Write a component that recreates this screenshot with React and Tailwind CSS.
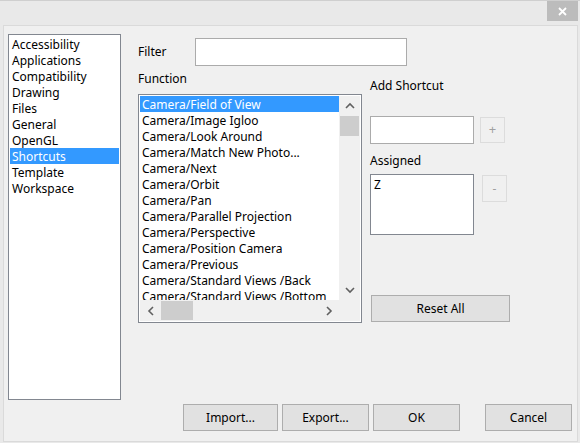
const categories = [
  'Accessibility',
  'Applications',
  'Compatibility',
  'Drawing',
  'Files',
  'General',
  'OpenGL',
  'Shortcuts',
  'Template',
  'Workspace',
]

const functions = [
  'Camera/Field of View',
  'Camera/Image Igloo',
  'Camera/Look Around',
  'Camera/Match New Photo...',
  'Camera/Next',
  'Camera/Orbit',
  'Camera/Pan',
  'Camera/Parallel Projection',
  'Camera/Perspective',
  'Camera/Position Camera',
  'Camera/Previous',
  'Camera/Standard Views /Back',
  'Camera/Standard Views /Bottom',
]

// small chevron drawn for the scrollbar arrows
function Chevron({ dir }) {
  const paths = {
    up: 'M1 6 L5 2 L9 6',
    down: 'M1 2 L5 6 L9 2',
    left: 'M6 1 L2 5 L6 9',
    right: 'M2 1 L6 5 L2 9',
  }
  const vertical = dir === 'up' || dir === 'down'
  return (
    <svg
      width={vertical ? 10 : 8}
      height={vertical ? 8 : 10}
      viewBox={vertical ? '0 0 10 8' : '0 0 8 10'}
      fill="none"
      stroke="#606060"
      strokeWidth="1.6"
    >
      <path d={paths[dir]} />
    </svg>
  )
}

function Button({ children, className = '' }) {
  return (
    <button className={`h-[27px] border border-[#adadad] bg-[#e1e1e1] text-[12px] text-black ${className}`}>
      {children}
    </button>
  )
}

export default function App() {
  return (
    <div
      className="w-[580px] h-[443px] bg-[#e9e9e9] border-t border-[#cfcfcf] flex flex-col overflow-hidden text-[12px] text-black"
      style={{ fontFamily: '"Noto Sans", "Open Sans", sans-serif' }}
    >
      {/* Title bar */}
      <div className="h-[24px] flex justify-end pr-[2px]">
        <div className="w-[31px] h-[20px] bg-[#bcbcbc] flex items-center justify-center">
          <svg width="9" height="9" viewBox="0 0 9 9" stroke="#fff" strokeWidth="1.8">
            <path d="M1 1 L8 8 M8 1 L1 8" />
          </svg>
        </div>
      </div>

      {/* Panel */}
      <div className="ml-[3px] mr-[2px] h-[417px] border border-[#dadada] bg-[#f0f0f0] flex flex-col">
        <div className="flex items-start h-[373px]">
          {/* Category list */}
          <div className="ml-[4px] mt-[8px] w-[113px] h-[366px] border border-[#828790] bg-white p-px">
            {categories.map((c) => (
              <div
                key={c}
                className={`h-[16px] pt-px leading-[15px] px-[2px] ${c === 'Shortcuts' ? 'bg-[#3399ff] text-white' : ''}`}
              >
                {c}
              </div>
            ))}
          </div>

          {/* Middle + right */}
          <div className="ml-[17px] mt-[12px] flex flex-col">
            <div className="flex items-center">
              <span className="w-[57px]">Filter</span>
              <div className="w-[212px] h-[28px] border border-[#ababab] bg-white" />
            </div>

            <div className="flex items-start">
              <div className="flex flex-col">
                <div className="mt-[5px] h-[16px] leading-[16px]">Function</div>
                <div className="mt-[7px] w-[224px] h-[229px] border border-[#828790] bg-white p-px flex flex-col">
                  <div className="flex h-[204px]">
                    <div className="w-[199px] overflow-hidden">
                      {functions.map((f, i) => (
                        <div
                          key={f}
                          className={`h-[16px] pt-px leading-[15px] px-[2px] whitespace-nowrap ${i === 0 ? 'bg-[#3399ff] text-white' : ''}`}
                        >
                          {f}
                        </div>
                      ))}
                    </div>
                    {/* vertical scrollbar */}
                    <div className="w-[21px] bg-[#f0f0f0] flex flex-col">
                      <div className="h-[20px] flex items-center justify-center">
                        <Chevron dir="up" />
                      </div>
                      <div className="mx-px h-[20px] bg-[#cdcdcd]" />
                      <div className="flex-1" />
                      <div className="h-[20px] flex items-center justify-center">
                        <Chevron dir="down" />
                      </div>
                    </div>
                  </div>
                  {/* horizontal scrollbar */}
                  <div className="flex h-[21px]">
                    <div className="w-[199px] bg-[#f0f0f0] flex items-center">
                      <div className="w-[21px] flex items-center justify-center">
                        <Chevron dir="left" />
                      </div>
                      <div className="w-[32px] h-[19px] bg-[#cdcdcd]" />
                      <div className="flex-1" />
                      <div className="w-[21px] flex items-center justify-center">
                        <Chevron dir="right" />
                      </div>
                    </div>
                    <div className="w-[21px] bg-[#f0f0f0]" />
                  </div>
                </div>
              </div>

              {/* Right column */}
              <div className="ml-[8px] flex flex-col">
                <div className="mt-[12px] h-[16px] leading-[16px]">Add Shortcut</div>
                <div className="mt-[22px] flex items-center">
                  <div className="w-[104px] h-[28px] border border-[#ababab] bg-white" />
                  <div className="ml-[6px] w-[25px] h-[26px] border border-[#dcdcdc] flex items-center justify-center text-[#a0a0a0] text-[13px]">
                    +
                  </div>
                </div>
                <div className="mt-[9px] h-[16px] leading-[16px]">Assigned</div>
                <div className="mt-[5px] flex items-start">
                  <div className="w-[104px] h-[61px] border border-[#828790] bg-white px-[3px] pt-[2px] leading-[16px]">
                    Z
                  </div>
                  <div className="ml-[8px] mt-px w-[25px] h-[27px] border border-[#dcdcdc] flex items-center justify-center text-[#a0a0a0]">
                    -
                  </div>
                </div>
                <Button className="mt-[60px] ml-px w-[139px]">Reset All</Button>
              </div>
            </div>
          </div>
        </div>

        {/* Bottom buttons */}
        <div className="mt-[5px] flex justify-end pr-[5px]">
          <Button className="w-[95px]">Import...</Button>
          <Button className="ml-[4px] w-[87px]">Export...</Button>
          <Button className="ml-[4px] w-[87px]">OK</Button>
          <Button className="ml-[25px] w-[87px]">Cancel</Button>
        </div>
      </div>
    </div>
  )
}
